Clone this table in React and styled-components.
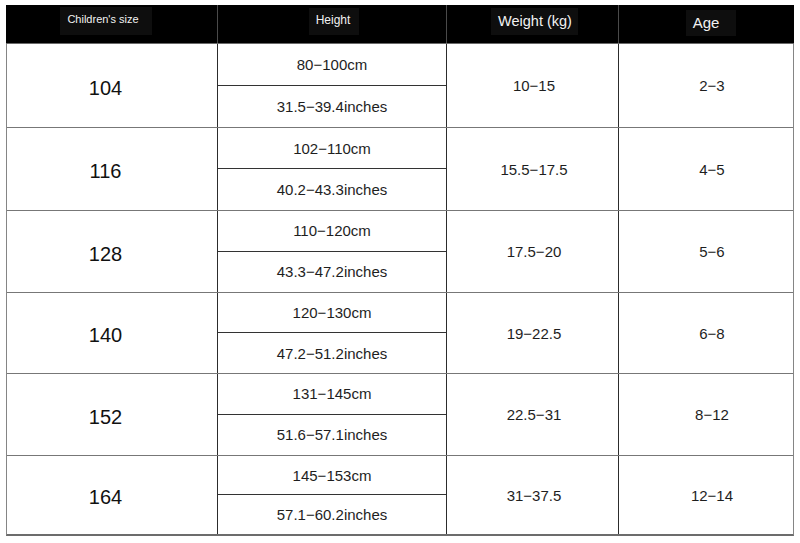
import React from "react";
import styled, { createGlobalStyle } from "styled-components";

const Global = createGlobalStyle`
  html, body { margin: 0; padding: 0; background: #ffffff; }
  body { font-family: "Liberation Sans", Arial, sans-serif; color: #1c1c1c; }
`;

const Table = styled.div`
  width: 788px;
  margin: 5px 0 0 6px;
`;

const Header = styled.div`
  display: grid;
  grid-template-columns: 211px 229px 172px 176px;
  height: 39px;
  box-sizing: border-box;
  background: #000;
  border-bottom: 1px solid #6a6a6a;
`;

const HeadCell = styled.div`
  display: flex;
  justify-content: center;
  align-items: flex-start;
  box-sizing: border-box;
  border-left: ${(p) => (p.$first ? "none" : "1px solid #4a4a4a")};
  padding-left: ${(p) => Math.max(0, p.$nudge * 2)}px;
  padding-right: ${(p) => Math.max(0, -p.$nudge * 2)}px;
`;

const HeadLabel = styled.span`
  display: block;
  box-sizing: border-box;
  margin-top: ${(p) => p.$top}px;
  height: ${(p) => p.$h}px;
  padding: ${(p) => p.$pt}px ${(p) => p.$pr}px 0 ${(p) => p.$pl}px;
  background: #0e0e0e;
  color: #f2f2f2;
  font-size: ${(p) => p.$fs}px;
  line-height: ${(p) => Math.round(p.$fs * 1.15)}px;
  white-space: nowrap;
`;

const Body = styled.div`
  border-left: 1px solid #858585;
  border-right: 1px solid #858585;
  border-bottom: 2px solid #6c6c6c;
`;

const Row = styled.div`
  display: grid;
  grid-template-columns: 210px 229px 172px 175px;
  height: ${(p) => p.$h}px;
  box-sizing: border-box;
  border-bottom: ${(p) => (p.$last ? "none" : "1px solid #777")};
`;

const Cell = styled.div`
  display: flex;
  align-items: center;
  justify-content: center;
  box-sizing: border-box;
  border-left: ${(p) => (p.$first ? "none" : "1px solid #2c2c2c")};
  padding-left: ${(p) => Math.max(0, p.$nudge * 2)}px;
  padding-right: ${(p) => Math.max(0, -p.$nudge * 2)}px;
  padding-top: ${(p) => p.$down || 0}px;
  font-size: ${(p) => p.$fs}px;
  color: ${(p) => (p.$strong ? "#111" : "#1e1e1e")};
`;

const Split = styled.div`
  display: grid;
  grid-template-rows: 1fr 1fr;
  border-left: 1px solid #2c2c2c;
`;

const SubCell = styled.div`
  display: flex;
  align-items: center;
  justify-content: center;
  font-size: 15px;
  color: #1e1e1e;
  border-bottom: ${(p) => (p.$top ? "1px solid #333" : "none")};
`;

const heads = [
  { text: "Children's size", nudge: -5.5, top: 2, h: 28, fs: 11, pt: 6, pl: 7, pr: 13 },
  { text: "Height", nudge: 2, top: 3, h: 27, fs: 12, pt: 5, pl: 7, pr: 9 },
  { text: "Weight (kg)", nudge: 2, top: 3, h: 27, fs: 14.5, pt: 5, pl: 7, pr: 6 },
  { text: "Age", nudge: 4.5, top: 5, h: 26, fs: 15, pt: 4, pl: 7, pr: 17 },
];

const rows = [
  { size: "104", cm: "80−100cm", inch: "31.5−39.4inches", kg: "10−15", age: "2−3", h: 84 },
  { size: "116", cm: "102−110cm", inch: "40.2−43.3inches", kg: "15.5−17.5", age: "4−5", h: 83 },
  { size: "128", cm: "110−120cm", inch: "43.3−47.2inches", kg: "17.5−20", age: "5−6", h: 82 },
  { size: "140", cm: "120−130cm", inch: "47.2−51.2inches", kg: "19−22.5", age: "6−8", h: 81 },
  { size: "152", cm: "131−145cm", inch: "51.6−57.1inches", kg: "22.5−31", age: "8−12", h: 82 },
  { size: "164", cm: "145−153cm", inch: "57.1−60.2inches", kg: "31−37.5", age: "12−14", h: 78 },
];

export default function App() {
  return (
    <>
      <Global />
      <Table>
        <Header>
          {heads.map((hd, i) => (
            <HeadCell key={hd.text} $first={i === 0} $nudge={hd.nudge}>
              <HeadLabel $top={hd.top} $h={hd.h} $fs={hd.fs} $pt={hd.pt} $pl={hd.pl} $pr={hd.pr}>
                {hd.text}
              </HeadLabel>
            </HeadCell>
          ))}
        </Header>
        <Body>
          {rows.map((r, i) => (
            <Row key={r.size} $h={r.h} $last={i === rows.length - 1}>
              <Cell $first $nudge={-6.5} $down={5} $fs={20} $strong>
                {r.size}
              </Cell>
              <Split>
                <SubCell $top>{r.cm}</SubCell>
                <SubCell>{r.inch}</SubCell>
              </Split>
              <Cell $nudge={1.5} $fs={15}>
                {r.kg}
              </Cell>
              <Cell $nudge={6} $fs={15}>
                {r.age}
              </Cell>
            </Row>
          ))}
        </Body>
      </Table>
    </>
  );
}
